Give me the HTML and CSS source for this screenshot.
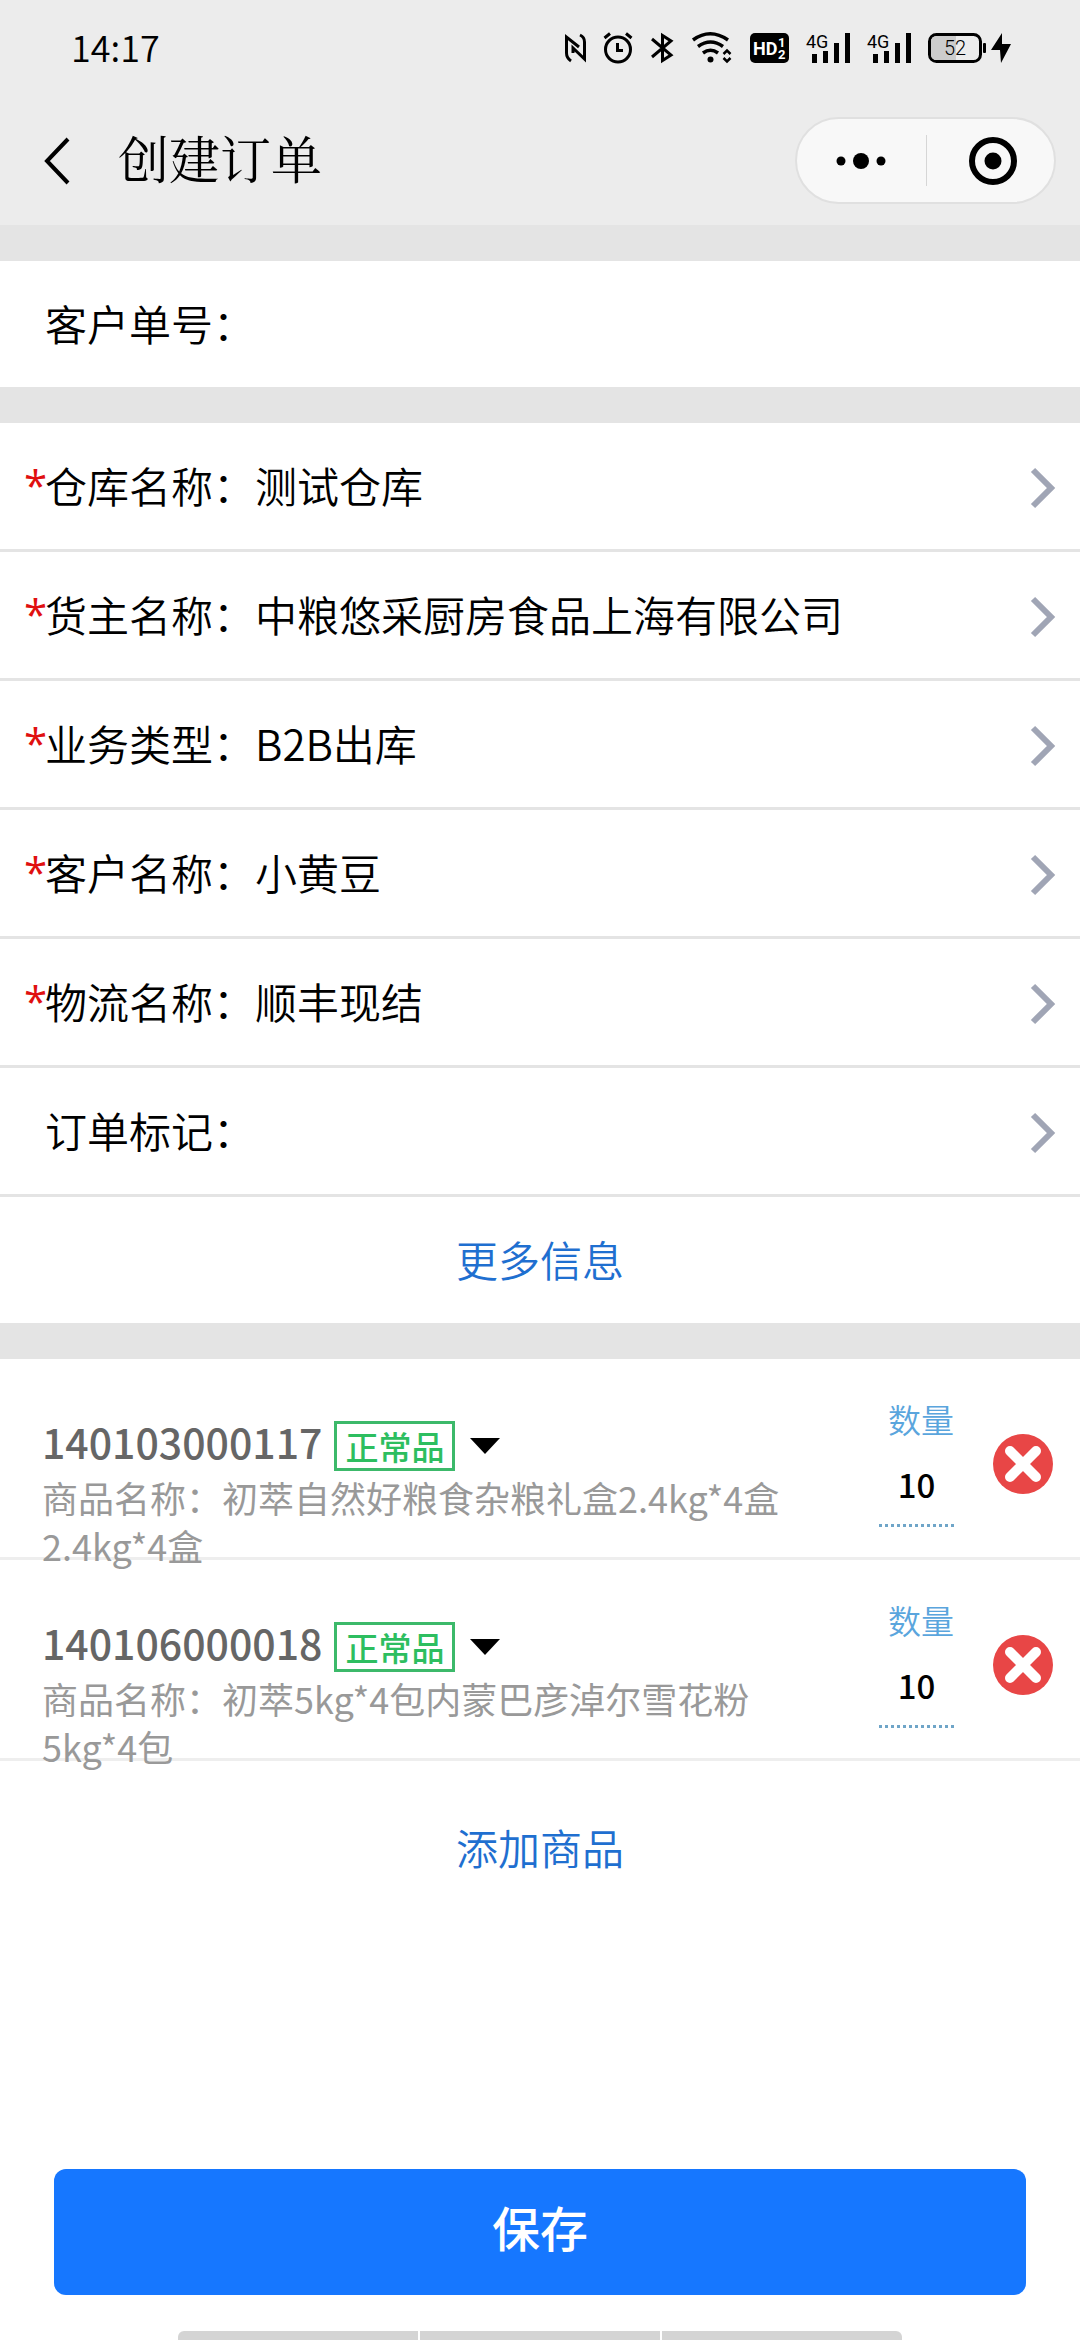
FILE: index.html
```html
<!DOCTYPE html>
<html lang="zh-CN">
<head>
    <meta charset="UTF-8">
    <meta name="viewport" content="width=device-width, initial-scale=1.0">
    <title>创建订单</title>
    <link rel="stylesheet" href="styles.css">
</head>
<body>
    <header class="header">
        <div class="status-bar">
            <span class="time">14:17</span>
            <div class="status-icons">
                <!-- NFC -->
                <svg width="21" height="30" viewBox="0 0 21 30" fill="none" stroke="#000" stroke-width="3">
                    <path d="M6 28Q1.500 25 1.500 20V4L14 14M8 20V15L19.500 26V9Q19.500 4 15 2"/>
                </svg>
                <!-- Alarm -->
                <svg width="30" height="32" viewBox="0 0 30 32" fill="none" stroke="#000" stroke-width="3">
                    <circle cx="15" cy="17.500" r="12.500"/>
                    <path d="M1.500 6L7 1.500M28.500 6L23 1.500M14.500 11V18.500H20"/>
                </svg>
                <!-- Bluetooth -->
                <svg width="24" height="30" viewBox="0 0 24 30" fill="none" stroke="#000" stroke-width="3">
                    <path d="M2 6L21 22L12.500 27.500V2.500L21 8L2 24"/>
                </svg>
                <!-- Wifi -->
                <svg width="42" height="32" viewBox="0 0 42 32" fill="none" stroke="#000" stroke-width="3.500">
                    <path d="M2 8Q19 -4.500 37 8M7 14.500Q19.500 5.500 32 14.500M12 21Q19.500 15.500 27 21"/>
                    <circle cx="19.500" cy="27.500" r="3" fill="#000" stroke="none"/>
                    <path d="M32.500 22L36 18.500L39.500 22M32.500 26L36 29.500L39.500 26" stroke-width="2.500"/>
                </svg>
                <!-- HD -->
                <svg width="39" height="30" viewBox="0 0 39 30">
                    <rect width="39" height="30" rx="5"/>
                    <text class="hd" x="3" y="22">HD</text>
                    <text class="hd-small" x="28" y="14">1</text>
                    <text class="hd-small" x="28" y="26">2</text>
                </svg>
                <!-- Signal -->
                <svg width="44" height="32" viewBox="0 0 44 32">
                    <text class="net" x="0" y="16">4G</text>
                    <path d="M6 22h5v9h-5zM17 19h5v12h-5zM28 11h5v20h-5zM39 1h5v30h-5z"/>
                </svg>
                <svg width="44" height="32" viewBox="0 0 44 32">
                    <text class="net" x="0" y="16">4G</text>
                    <path d="M6 22h5v9h-5zM17 19h5v12h-5zM28 11h5v20h-5zM39 1h5v30h-5z"/>
                </svg>
                <!-- Battery -->
                <svg width="84" height="30" viewBox="0 0 84 30">
                    <rect x="1.500" y="1.500" width="51" height="27" rx="7" fill="#ececec" stroke="#000" stroke-width="3"/>
                    <path d="M9 3H28V27H9Q3 27 3 21V9Q3 3 9 3Z" fill="#ccc"/>
                    <rect x="55" y="10" width="3" height="10" rx="1"/>
                    <text class="battery" x="27" y="22" text-anchor="middle">52</text>
                    <path d="M74 0L63 17H72L73 30L83 11H74Z"/>
                </svg>
            </div>
        </div>
        <div class="nav">
            <button class="back" aria-label="返回">
                <svg width="26" height="48" viewBox="0 0 26 48" fill="none" stroke="#000" stroke-width="4">
                    <path d="M24 2L3 24L24 46"/>
                </svg>
            </button>
            <h1 class="title">创建订单</h1>
            <div class="capsule">
                <button aria-label="更多">
                    <svg width="52" height="50" viewBox="0 0 52 50">
                        <circle cx="6" cy="25" r="4.500"/>
                        <circle cx="26" cy="25" r="8"/>
                        <circle cx="46" cy="25" r="4.500"/>
                    </svg>
                </button>
                <button aria-label="关闭">
                    <svg width="50" height="50" viewBox="0 0 50 50">
                        <circle cx="25" cy="25" r="21" fill="none" stroke="#000" stroke-width="6"/>
                        <circle cx="25" cy="25" r="8.500"/>
                    </svg>
                </button>
            </div>
        </div>
    </header>

    <main class="content">
        <section class="group">
            <div class="row">
                <label for="customerNo">客户单号：</label>
                <input id="customerNo" class="row-input" type="text">
            </div>
        </section>

        <section class="group">
            <button class="row">
                <span class="star">*</span><span>仓库名称：</span><span class="value">测试仓库</span>
                <svg class="arrow" viewBox="0 0 24 42"><path d="M3 3L21 21L3 39"/></svg>
            </button>
            <button class="row">
                <span class="star">*</span><span>货主名称：</span><span class="value">中粮悠采厨房食品上海有限公司</span>
                <svg class="arrow" viewBox="0 0 24 42"><path d="M3 3L21 21L3 39"/></svg>
            </button>
            <button class="row">
                <span class="star">*</span><span>业务类型：</span><span class="value">B2B出库</span>
                <svg class="arrow" viewBox="0 0 24 42"><path d="M3 3L21 21L3 39"/></svg>
            </button>
            <button class="row">
                <span class="star">*</span><span>客户名称：</span><span class="value">小黄豆</span>
                <svg class="arrow" viewBox="0 0 24 42"><path d="M3 3L21 21L3 39"/></svg>
            </button>
            <button class="row">
                <span class="star">*</span><span>物流名称：</span><span class="value">顺丰现结</span>
                <svg class="arrow" viewBox="0 0 24 42"><path d="M3 3L21 21L3 39"/></svg>
            </button>
            <button class="row">
                <span>订单标记：</span><span class="value"></span>
                <svg class="arrow" viewBox="0 0 24 42"><path d="M3 3L21 21L3 39"/></svg>
            </button>
            <a class="link" href="#">更多信息</a>
        </section>

        <section class="group goods">
            <div class="item">
                <div class="info">
                    <div class="sku">
                        <span class="code">140103000117</span>
                        <select class="tag" aria-label="商品状态"><option>正常品</option></select>
                        <span class="triangle"></span>
                    </div>
                    <p class="name">商品名称：初萃自然好粮食杂粮礼盒2.4kg*4盒<br>2.4kg*4盒</p>
                </div>
                <div class="quantity">
                    <label for="qty1">数量</label>
                    <input id="qty1" type="text" value="10">
                </div>
                <button class="delete" aria-label="删除">
                    <svg viewBox="0 0 60 60"><circle cx="30" cy="30" r="30"/><path d="M17 17L43 43M43 17L17 43"/></svg>
                </button>
            </div>
            <div class="item">
                <div class="info">
                    <div class="sku">
                        <span class="code">140106000018</span>
                        <select class="tag" aria-label="商品状态"><option>正常品</option></select>
                        <span class="triangle"></span>
                    </div>
                    <p class="name">商品名称：初萃5kg*4包内蒙巴彦淖尔雪花粉<br>5kg*4包</p>
                </div>
                <div class="quantity">
                    <label for="qty2">数量</label>
                    <input id="qty2" type="text" value="10">
                </div>
                <button class="delete" aria-label="删除">
                    <svg viewBox="0 0 60 60"><circle cx="30" cy="30" r="30"/><path d="M17 17L43 43M43 17L17 43"/></svg>
                </button>
            </div>
            <a class="link add" href="#">添加商品</a>
        </section>
    </main>

    <footer class="footer">
        <button class="save">保存</button>
        <div class="gesture-bar"><span></span><span></span><span></span></div>
    </footer>
</body>
</html>
```
FILE: styles.css
```css
* {
    box-sizing: border-box;
}

body {
    margin: 0;
    min-height: 100vh;
    display: flex;
    flex-direction: column;
    font-family: "Noto Sans CJK SC", sans-serif;
    font-size: 42px;
    font-weight: 350;
    color: #000;
    background-color: #fff;
}

button,
input,
select {
    margin: 0;
    padding: 0;
    border: none;
    border-radius: 0;
    background: none;
    font: inherit;
    color: inherit;
}

svg {
    display: block;
    flex-shrink: 0;
    overflow: visible;
}

/* Header */
.header {
    background-color: #ececec;
    height: 225px;
}

.status-bar {
    display: flex;
    justify-content: space-between;
    align-items: center;
    height: 96px;
    padding: 0 68px 0 71px;
}

.time {
    padding-bottom: 4px;
    font-size: 36px;
}

.status-icons {
    display: flex;
    align-items: center;
    gap: 17px;
}

.hd {
    font: bold 18px "Roboto", sans-serif;
    fill: #fff;
}

.hd-small {
    font: bold 13px "Roboto", sans-serif;
    fill: #fff;
}

.net {
    font: 18px "Roboto", sans-serif;
}

.battery {
    font: 300 20px "Roboto", sans-serif;
}

.nav {
    display: flex;
    align-items: center;
    height: 129px;
    padding: 0 24px 0 44px;
}

.back {
    margin-right: 48px;
}

.title {
    flex: 1;
    margin: 0;
    padding-bottom: 8px;
    font-family: "Noto Serif CJK SC", "Noto Sans CJK SC", serif;
    font-size: 51px;
    font-weight: 400;
    line-height: 60px;
}

.capsule {
    display: flex;
    width: 261px;
    height: 87px;
    padding: 16px 0;
    border: 2px solid #e0e0e0;
    border-radius: 44px;
    background-color: #f8f8f8;
}

.capsule button {
    width: 50%;
    display: flex;
    justify-content: center;
    align-items: center;
}

.capsule button + button {
    padding-left: 6px;
    border-left: 1px solid #d6d6d6;
}

/* Form rows */
.content {
    flex: 1;
}

.group {
    border-top: 36px solid #e4e4e4;
}

.row {
    display: flex;
    align-items: center;
    width: 100%;
    height: 129px;
    padding: 0 26px 4px 45px;
    border-bottom: 3px solid #e4e4e4;
    text-align: left;
}

.row:only-child {
    height: 126px;
    border-bottom: none;
}

.row-input {
    flex: 1;
    min-width: 0;
    outline: none;
}

.star {
    width: 21px;
    margin-left: -21px;
    font-family: "Open Sans", sans-serif;
    font-weight: 500;
    color: #e01010;
}

.value {
    flex: 1;
}

.arrow {
    width: 24px;
    height: 42px;
    margin-top: 8px;
    fill: none;
    stroke: #a0a5b5;
    stroke-width: 6px;
}

.link {
    display: flex;
    justify-content: center;
    align-items: center;
    height: 126px;
    padding-bottom: 4px;
    color: #1f6fd0;
    text-decoration: none;
}

.add {
    margin-top: 24px;
}

/* Goods list */
.item {
    display: flex;
    align-items: flex-start;
    height: 201px;
    padding: 0 27px 0 42px;
    border-bottom: 3px solid #eee;
}

.info {
    flex: 1;
    padding-top: 62px;
}

.sku {
    display: flex;
    align-items: center;
    height: 50px;
    font-weight: 500;
    color: #666;
}

.code {
    padding-bottom: 10px;
    font-size: 41px;
}

.tag {
    appearance: none;
    height: 50px;
    margin: 0 15px 0 12px;
    padding: 0 8px;
    border: 3px solid #3cb96a;
    font-size: 33px;
    font-weight: 500;
    line-height: 42px;
    color: #2dbe60;
}

.triangle {
    border: 15px solid transparent;
    border-top: 16px solid #000;
    border-bottom: none;
}

.name {
    margin: 2px 0 0;
    font-size: 36px;
    font-weight: 400;
    line-height: 48px;
    color: #999;
}

.quantity {
    display: flex;
    flex-direction: column;
    width: 75px;
    padding-top: 36px;
    margin-right: 39px;
    font-size: 33px;
    line-height: 48px;
    color: #5aa5dd;
}

.quantity label {
    text-align: right;
}

.quantity input {
    width: 100%;
    height: 84px;
    border-bottom: 3px dotted #6fa5c8;
    font-weight: 500;
    text-align: center;
    color: #000;
}

.delete {
    margin-top: 75px;
}

.delete svg {
    width: 60px;
    height: 60px;
    fill: #e84646;
    stroke-linecap: round;
}

.delete path {
    stroke: #fff;
    stroke-width: 10px;
}

/* Footer */
.footer {
    padding: 0 54px;
}

.save {
    display: block;
    width: 100%;
    height: 126px;
    padding-bottom: 12px;
    border-radius: 12px;
    background-color: #1677ff;
    font-size: 48px;
    font-weight: 500;
    color: #fff;
}

.gesture-bar {
    display: flex;
    gap: 2px;
    width: 67vw;
    height: 9px;
    margin: 36px auto 0;
    border-radius: 6px 6px 0 0;
    overflow: hidden;
}

.gesture-bar span {
    flex: 1;
    background-color: #d4d4d4;
}
```
